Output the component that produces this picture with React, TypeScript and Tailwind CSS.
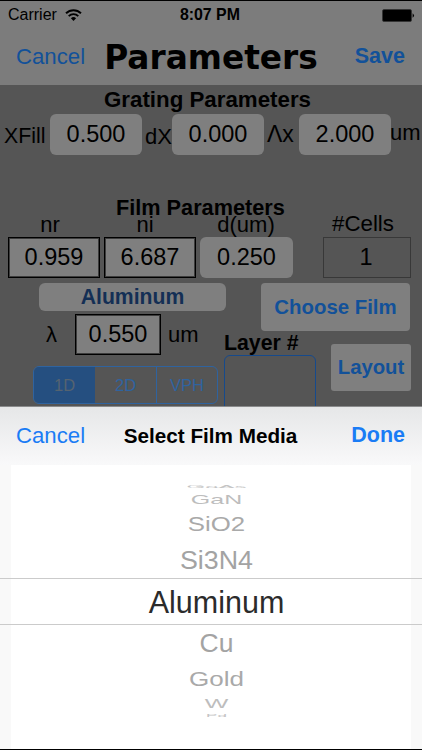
import React from 'react';
import clsx from 'clsx';

const mediaRows = [
  { name: 'GaAs', row: 'h-[11px]', text: 'text-[24px] scale-y-[0.17] text-[#c4c4c4]' },
  { name: 'GaN', row: 'h-[15px]', text: 'text-[25px] scale-y-[0.49] text-[#bdbdbd]' },
  { name: 'SiO2', row: 'h-[35px]', text: 'mt-[1px] text-[25.8px] scale-y-[0.78] text-[#a9a9a9]' },
  { name: 'Si3N4', row: 'h-[36px]', text: 'mt-[2px] text-[26.8px] scale-y-[0.94] text-[#a3a3a3]' },
  {
    name: 'Aluminum',
    row: '-mx-[11px] h-[47px] border-y border-[#cbcbcb]',
    text: 'mt-[2px] text-[30.5px] text-[#2b2b2b]',
  },
  { name: 'Cu', row: 'h-[36px]', text: 'text-[26.5px] scale-y-[0.96] text-[#a3a3a3]' },
  { name: 'Gold', row: 'h-[35px]', text: 'text-[26px] scale-y-[0.78] text-[#a9a9a9]' },
  { name: 'W', row: 'h-[15px]', text: 'text-[25px] scale-y-[0.48] text-[#bdbdbd]' },
  { name: 'Pd', row: 'h-[9px]', text: 'text-[17px] scale-y-[0.19] text-[#c4c4c4]' },
];

const outlined = 'border border-black bg-[#7f7f7f] shadow-[inset_0_0_0_1px_#3c3c3c]';
const filled = 'rounded-[6px] bg-[#7f7f7f]';

function Field({ value, className }: { value: string; className?: string }) {
  return (
    <div
      className={clsx(
        'flex h-[41px] shrink-0 items-center justify-center text-[23.5px] leading-none text-black',
        className,
      )}
    >
      {value}
    </div>
  );
}

function StatusBar() {
  return (
    <div className="flex h-[29px] items-center border-t border-black pr-[7px] pl-[8px] text-[16px] leading-none">
      <span>Carrier</span>
      <svg className="ml-[8px] h-[12px] w-[17px]" viewBox="0 0 17 12">
        <path d="M1 4.3A10.7 10.7 0 0 1 16 4.3" fill="none" stroke="#000" strokeWidth="1.9" />
        <path d="M3.7 7.1A6.9 6.9 0 0 1 13.3 7.1" fill="none" stroke="#000" strokeWidth="1.9" />
        <path d="M5.9 9.3A3.8 3.8 0 0 1 11.1 9.3L8.5 12Z" fill="#000" />
      </svg>
      <span className="ml-[98px] text-[15.9px] font-bold whitespace-nowrap">8:07 PM</span>
      <svg className="ml-auto h-[13px] w-[33px]" viewBox="0 0 33 13">
        <rect x="0.5" y="0.5" width="29" height="12" rx="1.5" fill="#000" stroke="#333" strokeWidth="0.8" />
        <path d="M30.6 4.2Q33.4 6.5 30.6 8.8Z" fill="#000" />
      </svg>
    </div>
  );
}

function NavBar() {
  return (
    <div className="flex h-[56px] items-center justify-between pr-[17px] pl-[16px] text-[22.2px] leading-none text-[#125199]">
      <span className="w-[88px]">Cancel</span>
      <h1 className="mt-[2px] -mr-[1px] font-['DejaVu_Sans'] text-[32.8px] font-bold text-black">Parameters</h1>
      <span className="w-[88px] text-right text-[21.5px] font-bold">Save</span>
    </div>
  );
}

function ParameterForm() {
  return (
    <div className="flex h-[321px] flex-col overflow-hidden bg-[#555555] text-[22px] text-black">
      <h2 className="ml-[104px] h-[29px] text-[22.3px] leading-[29px] font-bold">Grating Parameters</h2>
      <div className="flex h-[41px] shrink-0 items-center leading-none">
        <span className="mt-[4px] ml-[4px] w-[46px] text-[21.3px]">XFill</span>
        <Field value="0.500" className={clsx('w-[92px]', filled)} />
        <span className="mt-[4px] w-[30px] pl-[3px]">dX</span>
        <Field value="0.000" className={clsx('w-[92px]', filled)} />
        <span className="w-[35px] pl-[3px] text-[23px]">Λx</span>
        <Field value="2.000" className={clsx('w-[92px]', filled)} />
        <span className="-mt-[4px] -ml-[1px]">um</span>
      </div>

      <h2 className="mt-[40px] ml-[116px] h-[25px] shrink-0 text-[21.7px] leading-[25px] font-bold">Film Parameters</h2>
      <div className="-mt-[7px] flex h-[24px] shrink-0 pl-[8px] text-center leading-[24px]">
        <span className="w-[84px]">nr</span>
        <span className="ml-[11px] w-[84px]">ni</span>
        <span className="ml-[13px] w-[92px]">d(um)</span>
        <span className="-mt-[1px] ml-[25px] w-[92px] text-[22.3px]">#Cells</span>
      </div>
      <div className="flex shrink-0 gap-[4px] pl-[8px]">
        <Field value="0.959" className={clsx('w-[92px]', outlined)} />
        <Field value="6.687" className={clsx('w-[92px]', outlined)} />
        <Field value="0.250" className={clsx('w-[93px]', filled)} />
        <Field value="1" className="ml-[26px] w-[88px] border border-[#383838] pr-[2px]" />
      </div>

      <div className="mt-[5px] flex shrink-0">
        <div className="flex w-[224px] shrink-0 flex-col leading-none">
          <div className="ml-[39px] flex h-[28px] w-[187px] items-center justify-center rounded-[6px] bg-[#7f7f7f] text-[21.2px] font-bold text-[#142f55]">
            Aluminum
          </div>
          <div className="mt-[3px] flex items-center">
            <span className="ml-[46px] w-[29px]">λ</span>
            <Field value="0.550" className={clsx('w-[86px]', outlined)} />
            <span className="ml-[7px]">um</span>
          </div>
          <div className="mt-[11px] ml-[33px] flex h-[38px] w-[185px] shrink-0 rounded-[6px] border border-[#2f639f] text-[16.5px] text-[#2f639f]">
            <span className="flex w-[61px] items-center justify-center rounded-l-[5px] bg-[#254f80] text-[#556370]">1D</span>
            <span className="flex w-[62px] items-center justify-center border-r border-[#2f639f]">2D</span>
            <span className="flex flex-1 items-center justify-center">VPH</span>
          </div>
        </div>

        <div className="font-bold text-[#125199]">
          <div className="ml-[37px] flex h-[48px] w-[149px] items-center justify-center rounded-[4px] bg-[#7f7f7f] text-[20.4px]">
            Choose Film
          </div>
          <div className="flex">
            <div className="w-[92px]">
              <div className="h-[24px] text-[21.3px] leading-[24px] whitespace-nowrap text-black">Layer #</div>
              <div className="h-[60px] rounded-[6px] border border-[#164a8c]" />
            </div>
            <div className="mt-[13px] ml-[15px] flex h-[47px] w-[80px] items-center justify-center rounded-[3px] bg-[#7f7f7f] text-[20.3px]">
              Layout
            </div>
          </div>
        </div>
      </div>
    </div>
  );
}

function MediaPicker() {
  return (
    <div className="flex h-[344px] flex-col border-t border-b border-t-[#8a8b8c] border-b-black bg-[#f9f9f9]">
      <div className="flex h-[58px] shrink-0 items-center justify-between bg-linear-to-b from-[#e6e7e8] to-[#f9f9fa] pr-[17px] pl-[16px] text-[22.2px] leading-none text-[#1a7cf5]">
        <span className="w-[88px]">Cancel</span>
        <span className="text-[20.7px] font-bold whitespace-nowrap text-black">Select Film Media</span>
        <span className="w-[88px] text-right text-[21.5px] font-bold">Done</span>
      </div>
      <div className="mx-[11px] flex flex-1 flex-col bg-white pt-[16px]">
        {mediaRows.map((media) => (
          <div key={media.name} className={clsx('flex shrink-0 items-center justify-center pl-[11px]', media.row)}>
            <span className={clsx('block leading-none', media.text)}>{media.name}</span>
          </div>
        ))}
      </div>
    </div>
  );
}

export default function App() {
  return (
    <div className="h-[750px] w-[422px] overflow-hidden bg-[#7c7c7c] font-['Liberation_Sans',sans-serif] text-black">
      <StatusBar />
      <NavBar />
      <ParameterForm />
      <MediaPicker />
    </div>
  );
}
